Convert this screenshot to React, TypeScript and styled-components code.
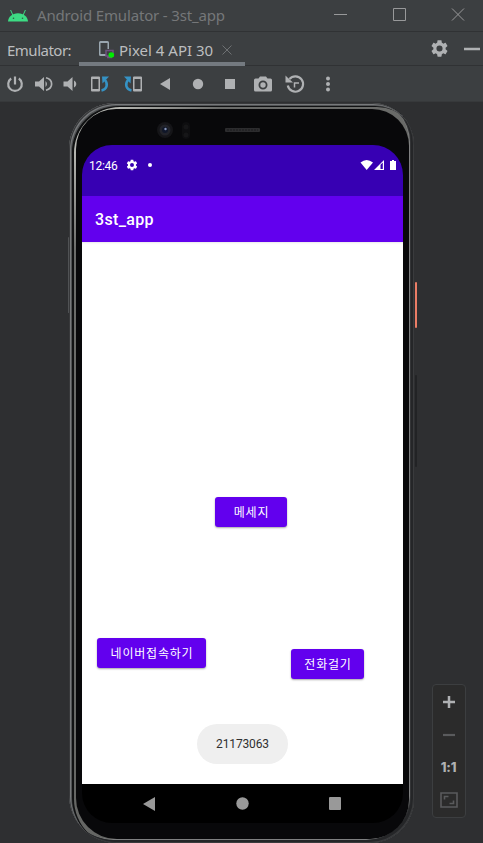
import React from "react";
import styled, { createGlobalStyle } from "styled-components";

const GlobalStyle = createGlobalStyle`
  * { box-sizing: border-box; }
  html, body { margin: 0; padding: 0; background: #2e2f31; overflow: hidden; }
  svg { display: block; flex: none; }
`;

const ui = `"Noto Sans", "Open Sans", sans-serif`;
const android = `Roboto, "Noto Sans CJK KR", sans-serif`;

const Window = styled.div`
  width: 483px;
  height: 843px;
  display: flex;
  flex-direction: column;
  background: #2e2f31;
  font-family: ${ui};
  overflow: hidden;
`;

const TitleBar = styled.header`
  height: 32px;
  flex: none;
  display: flex;
  align-items: center;
  background: #3c3f41;
  border-bottom: 1px solid #303234;
  padding: 0 18px 0 8px;
`;

const TitleText = styled.span`
  margin: -2px 0 0 9px;
  flex: 1;
  color: #757779;
  font-size: 15px;
  line-height: 20px;
  white-space: nowrap;
  letter-spacing: -0.16px;
`;

const WindowControls = styled.div`
  display: flex;
  gap: 45px;
  height: 30px;
  align-items: center;
  padding-bottom: 3px;
`;

const TabBar = styled.div`
  height: 34px;
  flex: none;
  display: flex;
  background: #3c3f41;
  border-bottom: 1px solid #303234;
`;

const TabLabel = styled.span`
  width: 79px;
  padding: 8px 0 0 7px;
  color: #bbbdbf;
  font-size: 15px;
  line-height: 20px;
  letter-spacing: -0.5px;
  white-space: nowrap;
`;

const Tab = styled.div`
  width: 166px;
  display: flex;
  padding: 8px 0 0 19px;
  height: 34px;
  border-bottom: 4px solid #747a80;
  color: #bbbdbf;
  font-size: 15px;
  line-height: 20px;
`;

const TabName = styled.span`
  width: 95px;
  margin: 0 8px 0 4px;
  white-space: nowrap;
`;

const TabActions = styled.div`
  flex: 1;
  display: flex;
  justify-content: flex-end;
  align-items: center;
  gap: 16px;
  padding-right: 3px;
`;

const Toolbar = styled.div`
  height: 36px;
  flex: none;
  display: flex;
  align-items: center;
  padding: 0 0 0 5px;
  background: #3c3f41;
  border-bottom: 1px solid #37393b;
`;

const Tool = styled.span<{ $gap: number }>`
  margin-left: ${(p) => p.$gap}px;
  width: 20px;
  height: 20px;
`;

const Stage = styled.main`
  flex: 1;
  display: flex;
  align-items: flex-start;
  padding-left: 69px;
`;

const Phone = styled.section`
  position: relative;
  width: 345px;
  height: 740px;
  margin-top: 1px;
  border-radius: 46px 42px 44px 48px;
  background: linear-gradient(135deg, #c9cac5 0, #b9bab5 34px, #6b6c6a 110px, #626361 100%);
  padding: 6px 5px 4px 7px;
  box-shadow:
    inset 1px 1px 0 #38393b,
    inset 2px 2px 0 #77797b,
    inset -1px -1px 0 #3a3b3d,
    inset 3px 3px 0 #505254,
    inset 5px 4px 0 #111213,
    inset -3px -3px 0 #252628,
    inset -4px -3px 0 #333436,
    inset -5px -4px 0 #7f8081;
`;

const Glass = styled.div`
  height: 100%;
  padding: 36px 6px 0;
  border-radius: 40px 37px 39px 41px;
  background: #08080a;
`;

const Sensors = styled.svg`
  position: absolute;
  left: 0;
  top: 0;
`;

const SideKey = styled.i<{ $top: number; $height: number; $color: string; $left: number; $w: number }>`
  position: absolute;
  left: ${(p) => p.$left}px;
  top: ${(p) => p.$top}px;
  width: ${(p) => p.$w}px;
  height: ${(p) => p.$height}px;
  background: ${(p) => p.$color};
  border-radius: 1px;
`;

const Screen = styled.div`
  position: relative;
  width: 321px;
  height: 678px;
  display: flex;
  flex-direction: column;
  border-radius: 30px;
  overflow: hidden;
  font-family: ${android};
`;

const StatusBar = styled.div`
  height: 51px;
  flex: none;
  display: flex;
  align-items: flex-start;
  padding: 13px 6px 0 7px;
  background: #3700b3;
  color: #fff;
  font-size: 12px;
  line-height: 16px;
`;

const Clock = styled.span`
  width: 37px;
  letter-spacing: -0.3px;
`;

const StatusIcons = styled.span`
  margin-left: auto;
  padding-top: 1px;
`;

const AppBar = styled.div`
  height: 46px;
  flex: none;
  padding: 14px 13px;
  background: #6200ee;
  color: #fff;
  font-size: 16px;
  font-weight: 500;
  line-height: 19px;
  letter-spacing: 0.35px;
`;

const Content = styled.div`
  flex: 1;
  display: flex;
  flex-direction: column;
  padding: 255px 39px 0 15px;
  background: #fff;
  box-shadow: inset 0 2px 2px -1px #e8e8ea;
`;

const CallRow = styled.div`
  margin-top: 111px;
  display: flex;
  justify-content: space-between;
  align-items: flex-start;
`;

const AppButton = styled.button<{ $w: number; $left?: number; $top?: number }>`
  width: ${(p) => p.$w}px;
  height: 30px;
  margin: ${(p) => p.$top ?? 0}px 0 0 ${(p) => p.$left ?? 0}px;
  padding: 0 0 1px 1px;
  border: 0;
  border-radius: 3px;
  background: #6200ee;
  color: #fff;
  font-family: "Noto Sans CJK KR", sans-serif;
  font-size: 12px;
  font-weight: 400;
  line-height: 18px;
  letter-spacing: 0.8px;
  white-space: nowrap;
  box-shadow: 0 1px 2px rgba(0, 0, 0, 0.35);
`;

const Toast = styled.div`
  position: absolute;
  left: 115px;
  bottom: 59px;
  width: 91px;
  height: 40px;
  border-radius: 20px;
  background: #efefef;
  color: #303030;
  font-size: 12px;
  letter-spacing: -0.15px;
  line-height: 41px;
  text-align: center;
`;

const NavBar = styled.div`
  height: 39px;
  flex: none;
  display: flex;
  align-items: center;
  justify-content: space-between;
  padding: 0 62px 0 61px;
  background: #000;
`;

const ZoomPanel = styled.aside`
  width: 34px;
  height: 134px;
  margin: 582px 0 0 18px;
  display: grid;
  grid-template-rows: repeat(4, 32.6px);
  place-items: center;
  padding-top: 1px;
  background: #2b2b2b;
  border: 1px solid #3c3e40;
  border-radius: 4px;
`;

const Ratio = styled.span`
  color: #afb1b3;
  font: 800 13px/16px Inter, sans-serif;
  letter-spacing: -0.2px;
  padding-right: 1px;
`;

const gearPath =
  "M19.14 12.94c.04-.3.06-.61.06-.94 0-.32-.02-.64-.07-.94l2.03-1.58c.18-.14.23-.41.12-.61l-1.92-3.32c-.12-.22-.37-.29-.59-.22l-2.39.96c-.5-.38-1.03-.7-1.62-.94l-.36-2.54c-.04-.24-.24-.41-.48-.41h-3.84c-.24 0-.43.17-.47.41l-.36 2.54c-.59.24-1.13.57-1.62.94l-2.39-.96c-.22-.08-.47 0-.59.22L2.74 8.87c-.12.21-.08.47.12.61l2.03 1.58c-.05.3-.09.63-.09.94s.02.64.07.94l-2.03 1.58c-.18.14-.23.41-.12.61l1.92 3.32c.12.22.37.29.59.22l2.39-.96c.5.38 1.03.7 1.62.94l.36 2.54c.05.24.24.41.48.41h3.84c.24 0 .44-.17.47-.41l.36-2.54c.59-.24 1.13-.56 1.62-.94l2.39.96c.22.08.47 0 .59-.22l1.92-3.32c.12-.22.07-.47-.12-.61l-2.01-1.58zM12 15.6A3.6 3.6 0 1 1 12 8.4a3.6 3.6 0 0 1 0 7.2z";

const Gear = ({ size, color }: { size: number; color: string }) => (
  <svg width={size} height={size} viewBox="2 2 20 20"><path d={gearPath} fill={color} /></svg>
);

const g = "#afb1b3";
const blue = "#3592c4";

const RotatePhone = ({ flip }: { flip?: boolean }) => (
  <svg width="20" height="20" viewBox="0 0 20 20">
    <g transform={flip ? "translate(20 0) scale(-1 1)" : undefined}>
      <path fillRule="evenodd" fill={g} d="M1 3.500q0-1 1-1h7q1 0 1 1v13q0 1-1 1H2q-1 0-1-1zM2.500 5v10h6V5z" />
      <path d="M11.500 16.500c5.500-1 6.800-6.500 3.500-10.500" fill="none" stroke={blue} strokeWidth="2.500" />
      <path d="M12 2.500h7l-6.500 7z" fill={blue} />
    </g>
  </svg>
);

const tools: { gap: number; icon: React.ReactNode }[] = [
  { gap: 0, icon: <svg width="20" height="20" viewBox="0 0 20 20"><path d="M10 2.500v8M6.200 4.500a6.800 6.800 0 1 0 7.600 0" fill="none" stroke={g} strokeWidth="2.200" /></svg> },
  { gap: 9, icon: <svg width="20" height="20" viewBox="0 0 20 20"><path d="M1 7.500h4l5-4.500v14l-5-4.500H1z" fill={g} /><path d="M11.500 7q3 3 0 6z" fill={g} /><path d="M12 3.800c7.500 2 7.500 10.400 0 12.400" fill="none" stroke={g} strokeWidth="1.700" /></svg> },
  { gap: 6, icon: <svg width="20" height="20" viewBox="0 0 20 20"><path d="M3.500 7.500h4l5-4.500v14l-5-4.500h-4z" fill={g} /><path d="M14 6.500c3 1.500 3 5.500 0 7z" fill={g} /></svg> },
  { gap: 10, icon: <RotatePhone /> },
  { gap: 13, icon: <RotatePhone flip /> },
  { gap: 12, icon: <svg width="20" height="20" viewBox="0 0 20 20"><path d="M5 10l10-6v12z" fill={g} /></svg> },
  { gap: 13, icon: <svg width="20" height="20" viewBox="0 0 20 20"><circle cx="10" cy="10" r="5.200" fill={g} /></svg> },
  { gap: 12, icon: <svg width="20" height="20" viewBox="0 0 20 20"><path d="M5 5h10v10H5z" fill={g} /></svg> },
  { gap: 13, icon: <svg width="20" height="20" viewBox="0 0 20 20"><path fillRule="evenodd" d="M1 6q0-1.500 1.500-1.500h3L7 2.500h6l1.500 2h3Q19 4.500 19 6v10q0 1.500-1.500 1.500h-15Q1 17.500 1 16zM10 6.500a4.500 4.500 0 1 0 0 9 4.500 4.500 0 0 0 0-9z" fill={g} /><circle cx="10" cy="11" r="2.700" fill={g} /></svg> },
  { gap: 12, icon: <svg width="20" height="20" viewBox="0 0 20 20"><path d="M4.500 5a7.700 7.700 0 1 1-1.700 6.500" fill="none" stroke={g} strokeWidth="2.200" /><path d="M.500 1.500L2.500 3.500 8 8.500H.500z" fill={g} /><path d="M9.500 13.500v-4.500h4.500" fill="none" stroke={g} strokeWidth="1.500" /></svg> },
  { gap: 13, icon: <svg width="20" height="20" viewBox="0 0 20 20" fill={g}><circle cx="10" cy="4.500" r="2" /><circle cx="10" cy="10" r="2" /><circle cx="10" cy="15.500" r="2" /></svg> },
];

export default function App() {
  return (
    <>
      <GlobalStyle />
      <Window>
        <TitleBar>
          <svg width="20" height="13" viewBox="0 0 20 13">
            <path d="M0 12.500C.4 7.800 4 4.200 10 4.200s9.600 3.600 10 8.300z" fill="#3ddc84" />
            <path d="M4.800 6L2.600 1M15.200 6l2.200-5" stroke="#3ddc84" strokeWidth="1" />
            <circle cx="5.500" cy="9.300" r=".8" fill="#315a45" /><circle cx="14.500" cy="9.300" r=".8" fill="#315a45" />
          </svg>
          <TitleText>Android Emulator - 3st_app</TitleText>
          <WindowControls>
            <svg width="14" height="14"><path d="M1 7.500h13" stroke="#98999a" /></svg>
            <svg width="14" height="14"><path d="M1.500 1.500h12v12h-12z" fill="none" stroke="#98999a" /></svg>
            <svg width="14" height="14"><path d="M1 1.500l12 12m0-12l-12 12" stroke="#98999a" /></svg>
          </WindowControls>
        </TitleBar>
        <TabBar>
          <TabLabel>Emulator:</TabLabel>
          <Tab>
            <svg width="17" height="19" viewBox="0 0 17 19">
              <path d="M1 2.500Q1 1 2.500 1h7Q11 1 11 2.500V9H9.500V3h-7v11H8v2H2.500Q1 16 1 14.500z" fill="#9aa7b0" />
              <path d="M8 10.500h7v5.500H8zM9 17.500h5" fill="none" stroke="#6e537f" strokeWidth="1.500" />
              <circle cx="13.300" cy="15" r="2.800" fill="#00ee00" />
            </svg>
            <TabName>Pixel 4 API 30</TabName>
            <svg width="10" height="20"><path d="M.5 5.500l9 9m0-9l-9 9" stroke="#6e7173" /></svg>
          </Tab>
          <TabActions>
            <Gear size={17} color={g} />
            <svg width="16" height="16"><path d="M0 8h16" stroke={g} strokeWidth="2.500" /></svg>
          </TabActions>
        </TabBar>
        <Toolbar>
          {tools.map((t, i) => <Tool key={i} $gap={t.gap}>{t.icon}</Tool>)}
        </Toolbar>
        <Stage>
          <Phone>
            <Sensors width="345" height="42" viewBox="0 0 345 42">
              <circle cx="96" cy="27" r="8" fill="#151518" /><circle cx="96" cy="27" r="5.500" fill="#222329" />
              <circle cx="96" cy="27" r="3" fill="#101729" /><circle cx="96.500" cy="26" r="1.200" fill="#8796b9" />
              <rect x="113" y="19" width="8" height="17" rx="4" fill="#0e0e10" />
              <circle cx="117" cy="24" r="2.500" fill="#161618" /><circle cx="117" cy="32" r="2.500" fill="#161618" />
              <rect x="156" y="25" width="35" height="4" rx="1" fill="#2c2c2e" />
              <path d="M158 27h31" stroke="#1b1b1c" strokeDasharray="2 1" />
            </Sensors>
            <SideKey $left={-1} $w={1} $top={134} $height={76} $color="#505254" />
            <SideKey $left={346} $w={2} $top={179} $height={46} $color="#eb7d66" />
            <SideKey $left={346} $w={2} $top={272} $height={92} $color="#222325" />
            <Glass>
              <Screen>
                <StatusBar>
                  <Clock>12:46</Clock>
                  <svg width="29" height="16" viewBox="0 0 29 16">
                    <g transform="translate(.5 1.500) scale(.55) translate(-2 -2)"><path d={gearPath} fill="#fff" /></g>
                    <circle cx="24" cy="7" r="2" fill="#fff" />
                  </svg>
                  <StatusIcons>
                    <svg width="37" height="13" viewBox="0 0 37 13" fill="#fff">
                      <path d="M.5 3.500q6-5 12.500 0L6.700 11z" />
                      <path fillRule="evenodd" d="M14 11L24 1V11zM20.500 5.800V10h2.300V3.500z" />
                      <path d="M30 2h2V1h2v1h2v9h-6z" />
                    </svg>
                  </StatusIcons>
                </StatusBar>
                <AppBar>3st_app</AppBar>
                <Content>
                  <AppButton $w={72} $left={118}>메세지</AppButton>
                  <CallRow>
                    <AppButton $w={109}>네이버접속하기</AppButton>
                    <AppButton $w={73} $top={11}>전화걸기</AppButton>
                  </CallRow>
                </Content>
                <NavBar>
                  <svg width="12" height="14"><path d="M0 7L12 0v14z" fill="#999" /></svg>
                  <svg width="13" height="13"><circle cx="6.500" cy="6.500" r="6.200" fill="#999" /></svg>
                  <svg width="12" height="13"><rect width="12" height="13" rx="1" fill="#999" /></svg>
                </NavBar>
                <Toast>21173063</Toast>
              </Screen>
            </Glass>
          </Phone>
          <ZoomPanel>
            <svg width="14" height="14"><path d="M7 1v12M1 7h12" stroke={g} strokeWidth="2.500" /></svg>
            <svg width="14" height="14"><path d="M1 7h12" stroke="#5a5b5d" strokeWidth="2.200" /></svg>
            <Ratio>1:1</Ratio>
            <svg width="18" height="16" viewBox="0 0 18 16" fill="none" stroke="#5a5b5d" strokeWidth="1.600"><path d="M1 1h16v14H1zM4.500 7.500V4.500h4M13.500 8.500v3h-4" /></svg>
          </ZoomPanel>
        </Stage>
      </Window>
    </>
  );
}
